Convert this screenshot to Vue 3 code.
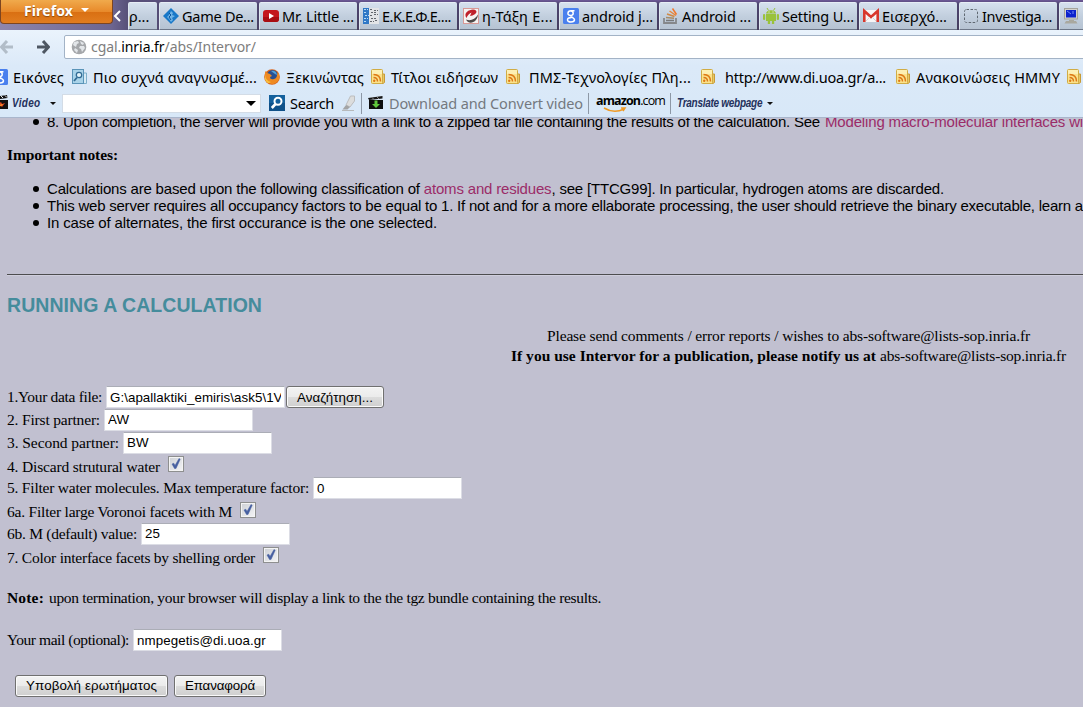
<script setup>
// Tracks text out (or in) so that it fills the given width in pixels.
const fit = (el, { value }) => {
  if (!value) return
  el.style.letterSpacing = '0px'
  const natural = el.getBoundingClientRect().width
  el.style.letterSpacing = (value - natural) / el.textContent.length + 'px'
}
const vFit = { mounted: fit }

const icons = {
  diamond: '<path d="M8 0L16 8 8 16 0 8Z" fill="#1878c8"/><path d="M8 3l2 2-1 2 3 1-3 2 1 2-2 2-2-3-2-2 2-2z" fill="#6fb3e6"/><path d="M6 5l2 2-2 2 2 3" stroke="#0c559c" fill="none"/>',
  youtube: '<rect x="0" y="2" width="16" height="12" rx="3" fill="#c4161c"/><path d="M0 9h16v2q0 3-3 3H3q-3 0-3-3z" fill="#a80d12"/><path d="M6 5l5 3-5 3z" fill="#fff"/>',
  ekefe: '<rect width="16" height="16" fill="#e2e4e7"/><rect width="6" height="16" fill="#2f78c6"/><path d="M1 1.500h4M1 4.500h3M2 7.500h4M1 10.500h4M1 13.500h3" stroke="#b9daf5" stroke-dasharray="2 1"/><path d="M7 1.500h3M11 2.500h4M8 4.500h6M7 7.500h3M11 6.500h4M8 10.500h6M7 13.500h4M12 12.500h3" stroke="#62676e" stroke-dasharray="2 1"/>',
  eclass: '<rect x=".5" y=".5" width="15" height="15" fill="#f6f3f2" stroke="#d99a96"/><path d="M3.500 10C0 5 6 1.500 10 1.500c5.500 0 4.500 5.500-3 6.500l1.500-3.500c-2.500 1-4 3-5 5.500z" fill="#c0202a"/><path d="M3 11.500c4 1.500 9 .5 12-5-.5 8-9 11-12 5z" fill="#4d4847"/>',
  google: '<rect width="16" height="16" rx="1.5" fill="#4a80ee"/><path d="M11.5 2.800H8C4 3 4 7.500 7.500 7.500 11 7.500 11 3.500 8 3M8 7.500c-1 1.500 3.500 2 3.500 4.200 0 3-7 3-7 .2 0-2 2.500-2.300 4-2.300" stroke="#fff" stroke-width="1.500" fill="none"/>',
  stack: '<path d="M1 10v5h12v-5" stroke="#85878a" stroke-width="1.800" fill="none"/><path d="M3 12.500h8" stroke="#77797b" stroke-width="1.500"/><path d="M3 9.500l8 .8" stroke="#a68b68" stroke-width="1.500"/><path d="M4 6l7.500 2.500" stroke="#d08a45" stroke-width="1.500"/><path d="M6.500 3L13 7.500" stroke="#e8873a" stroke-width="1.500"/><path d="M9.500.5l4 6" stroke="#f0772a" stroke-width="1.500"/>',
  android: '<g fill="#9ac23c"><path d="M3 5.500C3 1 13 1 13 5.500z"/><rect x="3" y="6" width="10" height="7"/><rect x="0" y="6" width="2.200" height="6" rx="1"/><rect x="13.800" y="6" width="2.200" height="6" rx="1"/><rect x="4.800" y="12" width="2.300" height="4"/><rect x="8.900" y="12" width="2.300" height="4"/></g><path d="M4 0l1.500 2.500M12 0l-1.500 2.500" stroke="#9ac23c"/><path d="M5.500 4h1M9.500 4h1" stroke="#fff"/>',
  gmail: '<rect y="2" width="16" height="12" fill="#f7f5f5"/><path d="M1.300 14V3L8 9l6.700-6v11" stroke="#d8372c" stroke-width="2.600" fill="none"/><path d="M3 13l4-4M13 13L9 9" stroke="#d9cfcf"/>',
  blank: '<rect x="1.500" y="1.500" width="13" height="13" rx="2" fill="none" stroke="#5f6871" stroke-dasharray="2.500 1.500"/>',
  monitor: '<rect x="1.500" y=".5" width="13" height="10.500" fill="#d4d3cc" stroke="#a5a49c"/><rect x="3" y="2" width="10" height="7.500" fill="#0d22cc"/><path d="M4 3l4 3M10 3v3" stroke="#7189f6"/><path d="M6 12h5v1H6zM3 13h10l1.500 2.500H1.500z" fill="#a9a89f"/>',
  globe: '<circle cx="8" cy="8" r="7.300" fill="#a5a7aa"/><path d="M3 3l4-1 1 2-2 1-1 3-3-2zM9 2l4 2-1 2-2-1zM9 7l4 0 1 2-3 4-1-3-2-1zM4 9l3 2-1 3-3-3z" fill="#e3e6e9"/>',
  search: '<path d="M11 4h3.500v10.500H4" fill="#d7ebf5" stroke="#7fb0cb"/><rect x=".5" y=".5" width="11" height="14" fill="#a9d3e9" stroke="#5a94b8"/><circle cx="7" cy="6" r="2.700" fill="#e5f5fc" stroke="#316b94" stroke-width="1.300"/><path d="M5 8.500l-3 3.500" stroke="#316b94" stroke-width="1.800"/>',
  firefox: '<circle cx="8" cy="8" r="7.800" fill="#d9641b"/><circle cx="8.500" cy="6.500" r="5.500" fill="#284f92"/><path d="M7 2q5-1 6 4l-2-1z" fill="#54a1d6"/><path d="M1 2l2 2 3 1 2 2-2 1q0 3 4 2 3-1 3-4l1-3q3 5 0 9-4 5-9 2-5-2-4-8z" fill="#ef8a22"/><path d="M1 6q1 6 6 7-4 3-6-3z" fill="#f7c23c"/>',
  rss: '<path d="M11 5h2.500v8.500l-1.500 1H3" fill="#e9c766" stroke="#c89b35"/><rect x=".5" y=".5" width="11" height="14" rx="1" fill="#fbe28b" stroke="#d0ac45"/><path d="M1 1h10v4H1z" fill="#fdf0b4"/><circle cx="3.200" cy="11.700" r="1.200" fill="#dc7816"/><path d="M2.500 8.500q4 0 4 4M2.500 5.500q7 0 7 7" stroke="#dc7816" stroke-width="1.500" fill="none"/>',
  clapper: '<path d="M0 5h14v9H0z" fill="#111"/><path d="M0 2l13-2 .5 3L0 5z" fill="#111"/><path d="M3 1.500l2 2M7 1l2 2M11 .5l2 2" stroke="#e8e8e8"/><path d="M4 9l3-2 1 2 3-1-3 4-1-1-4 2z" fill="#e4471f"/><path d="M6 10l3-1-2 2z" fill="#f9c62e"/>',
  find: '<rect width="16" height="16" fill="#14609c"/><path d="M0 8h16v8H0z" fill="#0f5189"/><circle cx="9" cy="6.300" r="3.500" fill="none" stroke="#fff" stroke-width="2"/><path d="M6.500 9L2.800 13" stroke="#fff" stroke-width="2.600"/>',
  pen: '<path d="M9.500 1h4v5l-4.500 6-4-2z" fill="#dcdddd" stroke="#bcbdbe"/><path d="M5 10l4 2-2.500 2.500H1.500z" fill="#a3a4a5"/><path d="M1 15.500h12" stroke="#b7b9bb"/>',
  download: '<path d="M1 5h14v9H1z" fill="#0d0d0d"/><path d="M0 3l14.500-2v2.500L1 5z" fill="#161616"/><path d="M4 2.500l2 2M9 2l2 2" stroke="#888"/><path d="M6.500 5.500h3v3.500H12L8 13 4 9h2.500z" fill="#5fc63c"/>',
}

const tabs = [
  { icon: 'diamond', text: 'Game De...', width: 72 },
  { icon: 'youtube', text: 'Mr. Little ...', width: 72 },
  { icon: 'ekefe', text: 'Ε.Κ.Ε.Φ.Ε....', width: 69 },
  { icon: 'eclass', text: 'η-Τάξη Ε...', width: 71 },
  { icon: 'google', text: 'android j...', width: 71 },
  { icon: 'stack', text: 'Android ...', width: 69 },
  { icon: 'android', text: 'Setting U...', width: 72 },
  { icon: 'gmail', text: 'Εισερχό...', width: 65 },
  { icon: 'blank', text: 'Investiga...', width: 70 },
]

const bookmarks = [
  { icon: 'google', text: 'Εικόνες', width: 51 },
  { icon: 'search', text: 'Πιο συχνά αναγνωσμέ...', width: 164 },
  { icon: 'firefox', text: 'Ξεκινώντας', width: 78 },
  { icon: 'rss', text: 'Τίτλοι ειδήσεων', width: 107 },
  { icon: 'rss', text: 'ΠΜΣ-Τεχνολογίες Πλη...', width: 162 },
  { icon: 'rss', text: 'http://www.di.uoa.gr/a...', width: 161 },
  { icon: 'rss', text: 'Ανακοινώσεις ΗΜΜΥ', width: 144 },
  { icon: 'rss', text: '', width: 0 },
]

const fields = [
  { label: '2. First partner:', width: 93, value: 'AW' },
  { label: '3. Second partner:', width: 112, value: 'BW' },
  { label: '4. Discard strutural water', width: 153, check: true },
  { label: '5. Filter water molecules. Max temperature factor:', width: 302, value: '0' },
  { label: '6a. Filter large Voronoi facets with M', width: 225, check: true },
  { label: '6b. M (default) value:', width: 130, value: '25' },
  { label: '7. Color interface facets by shelling order', width: 248, check: true },
]
</script>

<template>
  <div class="window">
    <header class="chrome">
      <div class="tabbar">
        <div class="firefox"><b v-fit="49">Firefox</b><i class="caret"></i></div>
        <svg class="scroll" viewBox="0 0 15 30"><path d="M7 11L2 16l5 5" /></svg>
        <div class="tab first"><span>ρ...</span></div>
        <div v-for="t in tabs" :key="t.text" class="tab">
          <svg class="ico" viewBox="0 0 16 16" v-html="icons[t.icon]"></svg>
          <span v-fit="t.width">{{ t.text }}</span>
        </div>
        <div class="tab last"><svg class="ico" viewBox="0 0 16 16" v-html="icons.monitor"></svg></div>
      </div>

      <div class="nav">
        <svg class="arrow back" viewBox="0 0 14 14"><path d="M7 1L1.500 7 7 13M2 7h11" /></svg>
        <svg class="arrow" viewBox="0 0 14 14"><path d="M7 1l5.500 6L7 13M12 7H1" /></svg>
        <div class="url">
          <svg class="ico" viewBox="0 0 16 16" v-html="icons.globe"></svg>
          <span v-fit="165">cgal.<em>inria.fr</em>/abs/Intervor/</span>
        </div>
      </div>

      <div class="bookmarks">
        <template v-for="(b, i) in bookmarks" :key="i">
          <svg class="ico" :class="{ cut: i === 0 }" viewBox="0 0 16 16" v-html="icons[b.icon]"></svg>
          <span v-fit="b.width">{{ b.text }}</span>
        </template>
      </div>

      <div class="tools">
        <svg class="ico clap" viewBox="0 0 16 16" v-html="icons.clapper"></svg>
        <span class="brand"><b v-fit="29">Video</b></span>
        <i class="caret small"></i>
        <div class="combo"><i class="caret big"></i></div>
        <svg class="ico" viewBox="0 0 16 16" v-html="icons.find"></svg>
        <span v-fit="44">Search</span>
        <svg class="ico" viewBox="0 0 16 16" v-html="icons.pen"></svg>
        <i class="sep"></i>
        <svg class="ico" viewBox="0 0 16 16" v-html="icons.download"></svg>
        <span v-fit="194" class="muted">Download and Convert video</span>
        <i class="sep"></i>
        <div class="amazon">
          <span v-fit="69"><b>amazon</b>.com</span>
          <svg viewBox="0 0 24 6"><path d="M1 1q10 6 20 1M18 1l4 0-2 3" /></svg>
        </div>
        <i class="sep"></i>
        <span class="brand"><b v-fit="84">Translate webpage</b></span>
        <i class="caret small"></i>
      </div>
    </header>

    <main class="page">
      <ul class="steps">
        <li><span v-fit="773">8. Upon completion, the server will provide you with a link to a zipped tar file containing the results of the calculation. See</span><a v-fit="258">Modeling macro-molecular interfaces wi</a></li>
      </ul>
      <h4><span v-fit="111">Important notes:</span></h4>
      <ul class="notes">
        <li><span v-fit="897">Calculations are based upon the following classification of <a>atoms and residues</a>, see [TTCG99]. In particular, hydrogen atoms are discarded.</span></li>
        <li><span v-fit="1036">This web server requires all occupancy factors to be equal to 1. If not and for a more ellaborate processing, the user should retrieve the binary executable, learn a</span></li>
        <li><span v-fit="390">In case of alternates, the first occurance is the one selected.</span></li>
      </ul>
      <hr>
      <h2><span v-fit="255">RUNNING A CALCULATION</span></h2>
      <div class="contact">
        <p><span v-fit="483">Please send comments / error reports / wishes to abs-software@lists-sop.inria.fr</span></p>
        <p><b v-fit="365">If you use Intervor for a publication, please notify us at</b><span v-fit="186">abs-software@lists-sop.inria.fr</span></p>
      </div>

      <form @submit.prevent>
        <div class="row">
          <label><span v-fit="95">1.Your data file:</span></label>
          <input class="file" value="G:\apallaktiki_emiris\ask5\1V" readonly>
          <button type="button" class="browse"><span v-fit="76">Αναζήτηση...</span></button>
        </div>
        <div v-for="f in fields" :key="f.label" class="row" :class="{ checkrow: f.check }">
          <label><span v-fit="f.width">{{ f.label }}</span></label>
          <span v-if="f.check" class="check"><svg viewBox="0 0 14 14"><path d="M3 7l1.800-.8L6 8.500 10 1.500l1.200.8L7 11.500H5.500z" /></svg></span>
          <input v-else :value="f.value" readonly>
        </div>
        <p class="hint"><b v-fit="37">Note:</b><span v-fit="552">upon termination, your browser will display a link to the the tgz bundle containing the results.</span></p>
        <div class="row mail">
          <label><span v-fit="122">Your mail (optional):</span></label>
          <input value="nmpegetis@di.uoa.gr" readonly>
        </div>
        <div class="actions">
          <button class="submit"><span v-fit="131">Υποβολή ερωτήματος</span></button>
          <button class="reset"><span v-fit="70">Επαναφορά</span></button>
        </div>
      </form>
    </main>
  </div>
</template>

<style>
body { margin: 0; }
</style>

<style scoped>
.window { width: 1083px; height: 707px; overflow: hidden; display: flex; flex-direction: column; background: #c1c0d0; color: #000; }
.window * { box-sizing: border-box; }
span, b, a { white-space: nowrap; }
.chrome { height: 118px; flex: none; background: linear-gradient(#eaf3fc 30px, #dbe9f8 66px, #d8e8f8); border-bottom: 1px solid #a9b6cc; font: 14.5px/20px "Noto Sans", sans-serif; }
.ico { width: 16px; height: 16px; flex: none; display: block; }
.caret { width: 0; height: 0; border: 4px solid transparent; border-top-color: #fff; border-bottom: 0; }

.tabbar { display: flex; height: 30px; background: linear-gradient(90deg, #8e86ad 0, #6c6590 112px, #575078 128px, transparent 300px), linear-gradient(#6f5a98 0, #4e4570 4px, #453e5e); overflow: hidden; }
.firefox { width: 113px; height: 24px; flex: none; display: flex; padding: 1px 0 0 23px; color: #fff; font-size: 14px; background: linear-gradient(#f0aa4c, #e88a2b 50%, #d96f12 52%, #e17d20); border: 1px solid #7d4520; border-top: 0; border-radius: 0 0 4px 4px; text-shadow: 0 1px 1px #8a4a10; }
.firefox .caret { margin: 7px 0 0 8px; }
.scroll { width: 15px; height: 30px; flex: none; fill: none; stroke: #fff; stroke-width: 2; }
.tab { width: 98px; height: 28px; margin: 2px 2px 0 0; flex: none; display: flex; align-items: center; gap: 3px; padding: 0 0 0 3px; overflow: hidden; background: linear-gradient(#d6e1ee, #c2cfde 50%, #b6c3d2); border-top: 1px solid #e6edf5; border-left: 1px solid #dfe7f0; border-bottom: 1px solid #6d7788; border-radius: 2px 2px 0 0; }
.tab.first { width: 29px; padding-left: 0; }
.tab.last { width: 30px; }

.nav { display: flex; height: 35px; padding-top: 5px; overflow: hidden; }
.arrow { width: 14px; height: 14px; margin: 5px 22px 0 0; flex: none; fill: none; stroke: #4e5762; stroke-width: 3; }
.arrow + .arrow { margin-right: 14px; }
.arrow.back { stroke: #b2bdc8; }
.url { width: 1030px; flex: none; height: 24px; display: flex; align-items: center; gap: 4px; padding-left: 6px; background: #fff; border: 1px solid #a3b3c6; border-radius: 2px; color: #7d7d7d; }
.url span { font-size: 14px; }
.url em { font-style: normal; color: #000; }

.bookmarks { height: 24px; display: grid; grid-template-columns: 13px 59px 21px 171px 22px 85px 20px 115px 23px 172px 24px 171px 20px 151px 16px 1px; align-items: center; justify-items: start; overflow: hidden; }
.bookmarks .cut { margin-left: -8px; }

.tools { height: 28px; display: grid; grid-template-columns: 12px 38px 12px 207px 21px 51px 20px 7px 21px 199px 8px 74px 7px 90px 10px; align-items: center; justify-items: start; }
.clap { margin-left: -6px; }
.brand { font: italic 12.5px/14px "Liberation Sans", sans-serif; color: #24315c; transform: scaleX(.8); transform-origin: 0 50%; }
.caret.small { border-width: 3px 3px 0; border-top-color: #111; }
.caret.big { border-width: 5px 5px 0; border-top-color: #000; }
.combo { width: 199px; height: 19px; background: #fff; border: 1px solid #d3dce6; display: flex; align-items: center; justify-content: flex-end; padding-right: 4px; }
.sep { width: 1px; height: 21px; background: #8d98a6; }
.muted { color: #74797f; }
.amazon { display: flex; flex-direction: column; height: 21px; }
.amazon span { font: 12.5px/15px "Open Sans", sans-serif; }
.amazon svg { width: 24px; height: 6px; margin: -1px 0 0 7px; fill: none; stroke: #f09a24; stroke-width: 1.5; }

.page { flex: 1; padding-left: 7px; overflow: hidden; font: 15.5px/20px "Liberation Serif", serif; }
ul { margin: 0; padding: 0 0 0 40px; font: 15px/17px "Liberation Sans", sans-serif; list-style: none; }
li { height: 17px; display: flex; position: relative; }
li::before { content: ""; position: absolute; left: -14px; top: 6px; width: 6px; height: 6px; border-radius: 50%; background: #000; }
a { color: #9b2c68; }
.steps { margin-top: -5px; }
.steps li { gap: 5px; }
h4 { margin: 15px 0 15px; height: 20px; font: bold 15.5px/20px "Liberation Serif", serif; display: flex; }
hr { margin: 43px 0 0; border: 0; height: 2px; background: #4d4d4f; border-bottom: 1px solid #cfcedc; }
h2 { margin: 17px 0 0; height: 24px; display: flex; font: bold 19.5px/24px "Liberation Sans", sans-serif; color: #458c9c; }
.contact { width: 1563px; margin-top: 9px; }
.contact p { margin: 0; height: 20px; display: flex; justify-content: center; gap: 4px; }
form { margin-top: 20px; }
.row { display: flex; height: 22.75px; }
label { padding-top: 1px; display: flex; margin-right: 4px; }
.checkrow label { padding-top: 2.4px; margin-right: 8px; }
input { width: 149px; height: 22px; padding: 0 3px; border: 1px solid #dcdde5; border-top-color: #abadb6; border-radius: 1px; background: #fff; font: 13.33px "Liberation Sans", sans-serif; letter-spacing: .1px; color: #000; outline: 0; }
.file { width: 179px; letter-spacing: .05px; }
button { height: 22px; padding: 0; display: flex; align-items: center; justify-content: center; font: 13.33px "Liberation Sans", sans-serif; color: #000; background: linear-gradient(#f3f3f3, #ebebeb 49%, #dcdcdc 51%, #cfcfcf); border: 1px solid #707070; border-radius: 3px; box-shadow: inset 0 0 0 1px #fafafa; }
.browse { width: 98px; margin-left: 1px; }
.check { width: 16px; height: 16px; margin-top: 2px; border: 1px solid #8e8f8f; background: linear-gradient(135deg, #cdd0d6, #f4f4f5); box-shadow: inset 0 0 0 1px #f4f4f4; }
.check svg { display: block; width: 14px; height: 14px; fill: #465fa0; stroke: #465fa0; stroke-width: .5; }
.hint { margin: 20px 0 0; height: 20px; display: flex; gap: 5px; }
.mail { margin-top: 21px; }
.actions { display: flex; gap: 6px; margin-top: 23px; padding-left: 8px; }
.submit { width: 153px; }
.reset { width: 92px; }
</style>
